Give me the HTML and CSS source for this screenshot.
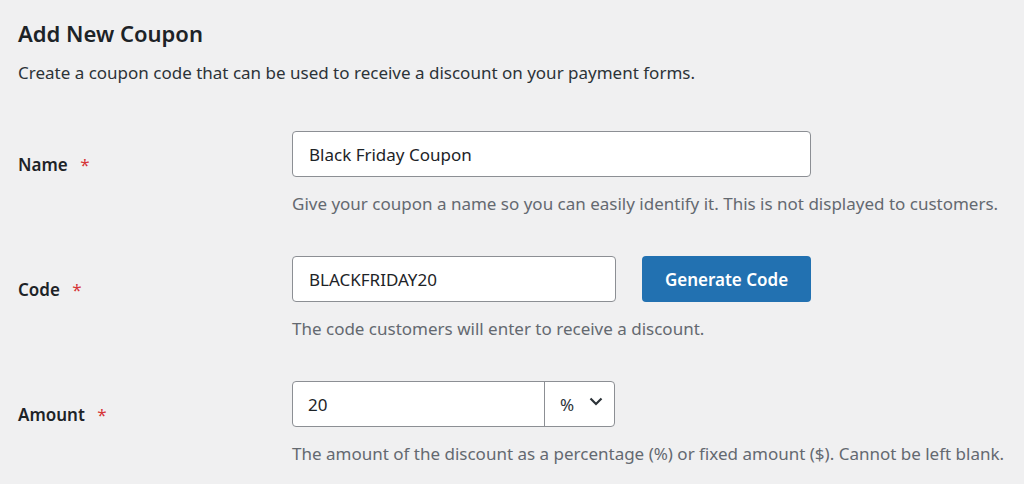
FILE: index.html
```html
<!DOCTYPE html>
<html>
<head>
<meta charset="utf-8">
<link rel="stylesheet" href="styles.css">
</head>
<body>
<div class="page">
  <h1 class="title">Add New Coupon</h1>
  <p class="intro">Create a coupon code that can be used to receive a discount on your payment forms.</p>
  <div class="form">
    <div class="row">
      <div class="label">Name <span class="req">*</span></div>
      <div class="field">
        <div class="input wide">Black Friday Coupon</div>
        <p class="help">Give your coupon a name so you can easily identify it. This is not displayed to customers.</p>
      </div>
    </div>
    <div class="row">
      <div class="label">Code <span class="req">*</span></div>
      <div class="field">
        <div class="line">
          <div class="input narrow">BLACKFRIDAY20</div>
          <div class="button">Generate Code</div>
        </div>
        <p class="help">The code customers will enter to receive a discount.</p>
      </div>
    </div>
    <div class="row">
      <div class="label">Amount <span class="req">*</span></div>
      <div class="field">
        <div class="combo">
          <div class="combo-value">20</div>
          <div class="combo-select">%
            <svg class="chev" width="14" height="9" viewBox="0 0 14 9"><path d="M1.5 1.5 L7 7 L12.5 1.5" fill="none" stroke="#2c3338" stroke-width="2.2"/></svg>
          </div>
        </div>
        <p class="help">The amount of the discount as a percentage (%) or fixed amount ($). Cannot be left blank.</p>
      </div>
    </div>
  </div>
</div>
</body>
</html>
```
FILE: styles.css
```css
html, body {
  margin: 0;
  padding: 0;
  background: #f0f0f1;
}
body {
  font-family: "Noto Sans", "Open Sans", sans-serif;
  color: #1d2327;
  font-size: 17px;
}
.page {
  padding: 18px 0 0 18px;
}
.title {
  margin: 0;
  font-size: 22px;
  line-height: 30px;
  font-weight: 600;
  color: #1d2327;
}
.intro {
  margin: 13px 0 0 0;
  font-size: 17px;
  line-height: 24px;
  color: #2c3338;
}
.form {
  margin-top: 46px;
}
.row {
  display: grid;
  grid-template-columns: 274px 1fr;
  margin-bottom: 40px;
}
.label {
  margin-top: 22px;
  line-height: 24px;
  font-weight: 600;
  color: #1d2327;
}
.req {
  color: #d63638;
  margin-left: 8px;
  font-weight: 400;
}
.input {
  box-sizing: border-box;
  height: 46px;
  border: 1px solid #8c8f94;
  border-radius: 4px;
  background: #fff;
  padding: 0 16px;
  display: flex;
  align-items: center;
  font-size: 17px;
  color: #1d2327;
}
.wide { width: 519px; }
.narrow { width: 324px; }
.line {
  display: flex;
  gap: 26px;
}
.button {
  box-sizing: border-box;
  width: 169px;
  height: 46px;
  background: #2271b1;
  color: #fff;
  border-radius: 4px;
  display: flex;
  align-items: center;
  justify-content: center;
  font-weight: 600;
  font-size: 17px;
}
.help {
  margin: 15px 0 0 0;
  line-height: 24px;
  color: #646970;
  font-size: 17px;
}
.combo {
  box-sizing: border-box;
  width: 323px;
  height: 46px;
  border: 1px solid #8c8f94;
  border-radius: 4px;
  background: #fff;
  display: flex;
}
.combo-value {
  width: 252px;
  padding-left: 15px;
  box-sizing: border-box;
  border-right: 1px solid #8c8f94;
  display: flex;
  align-items: center;
}
.combo-select {
  flex: 1;
  display: flex;
  align-items: center;
  padding-left: 15px;
  gap: 15px;
  color: #2c3338;
}
.chev {
  margin-top: -6px;
}
```
